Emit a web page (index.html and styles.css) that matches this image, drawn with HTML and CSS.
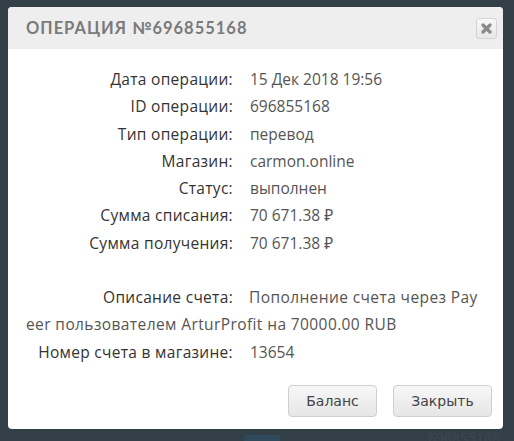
FILE: index.html
```html
<!DOCTYPE html>
<html lang="ru">
<head>
<meta charset="utf-8">
<title>Операция</title>
<link rel="stylesheet" href="styles.css">
</head>
<body>
<div class="backdrop">
  <div class="bg-bottom"><span class="bg-chip"></span><span class="bg-num">696855168</span></div>
  <div class="dialog">
    <div class="header">
      <span class="title">Операция №696855168</span>
      <button class="close" aria-label="Закрыть">
        <svg width="11" height="11" viewBox="0 0 11 11"><path d="M2 2 L9 9 M9 2 L2 9" stroke="#8a8a8a" stroke-width="3.2" stroke-linecap="round"/></svg>
      </button>
    </div>
    <div class="content">
      <div class="grid">
        <span class="label">Дата операции:</span><span class="value">15 Дек 2018 19:56</span>
        <span class="label">ID операции:</span><span class="value">696855168</span>
        <span class="label">Тип операции:</span><span class="value">перевод</span>
        <span class="label">Магазин:</span><span class="value">carmon.online</span>
        <span class="label">Статус:</span><span class="value">выполнен</span>
        <span class="label">Сумма списания:</span><span class="value">70 671.38 ₽</span>
        <span class="label">Сумма получения:</span><span class="value">70 671.38 ₽</span>
      </div>
      <div class="desc"><span class="label inline">Описание счета:</span><span class="value wide">Пополнение счета через Pay<br>eer пользователем ArturProfit на 70000.00 RUB</span></div>
      <div class="grid">
        <span class="label">Номер счета в магазине:</span><span class="value">13654</span>
      </div>
    </div>
    <div class="footer">
      <button class="btn btn-balance">Баланс</button>
      <button class="btn btn-close">Закрыть</button>
    </div>
  </div>
</div>
</body>
</html>
```

FILE: styles.css
```css
html, body {
  margin: 0;
  padding: 0;
}
body {
  background: #333f47;
  width: 514px;
  height: 441px;
  overflow: hidden;
  font-family: "Open Sans", "Noto Sans", sans-serif;
}
.backdrop {
  position: relative;
  padding: 7px 11px 0 8px;
  height: 441px;
  box-sizing: border-box;
}
.bg-bottom {
  position: absolute;
  left: 0;
  right: 0;
  bottom: 0;
  height: 12px;
}
.bg-chip {
  position: absolute;
  left: 244px;
  width: 36px;
  height: 6px;
  bottom: 0;
  background: #2f4a5a;
}
.bg-num {
  position: absolute;
  right: 14px;
  bottom: -4px;
  line-height: 14px;
  color: #3c4850;
  font-size: 14px;
}
.dialog {
  position: relative;
  background: #fff;
  border-radius: 4px;
  height: 422px;
  display: flex;
  flex-direction: column;
  overflow: hidden;
}
.header {
  height: 42px;
  background: #eeeeee;
  display: flex;
  align-items: center;
  justify-content: space-between;
  padding: 0 6px 0 18px;
  flex: none;
}
.title {
  font-family: "Lato", sans-serif;
  font-weight: 700;
  font-size: 16.5px;
  letter-spacing: 1px;
  color: #7a7a7a;
  text-transform: uppercase;
}
.close {
  width: 21px;
  height: 21px;
  padding: 0;
  border: 1px solid #d4d4d4;
  border-radius: 3px;
  background: linear-gradient(#f8f8f8, #e8e8e8);
  display: flex;
  align-items: center;
  justify-content: center;
}
.content {
  padding-top: 17px;
  font-size: 15.5px;
  line-height: 27.3px;
  flex: 1;
}
.grid {
  display: grid;
  grid-template-columns: 207px 1fr;
  column-gap: 17px;
  padding-left: 18px;
}
.label {
  text-align: right;
  color: #333;
  white-space: nowrap;
  letter-spacing: 0.3px;
}
.value {
  color: #555;
  white-space: nowrap;
}
.value.wide {
  letter-spacing: 0.4px;
}
.desc {
  margin-top: 27px;
  padding-left: 18px;
}
.label.inline {
  display: inline-block;
  width: 207px;
  margin-right: 16px;
}
.footer {
  display: flex;
  justify-content: flex-end;
  gap: 16px;
  padding: 0 11px 12px 0;
  flex: none;
}
.btn {
  height: 32px;
  border: 1px solid #cfcfcf;
  border-radius: 4px;
  background: linear-gradient(#f7f7f7, #e6e6e6);
  font-family: "DejaVu Sans", sans-serif;
  font-size: 14px;
  color: #444;
  padding: 0;
}
.btn-balance { width: 89px; }
.btn-close { width: 99px; }
```
